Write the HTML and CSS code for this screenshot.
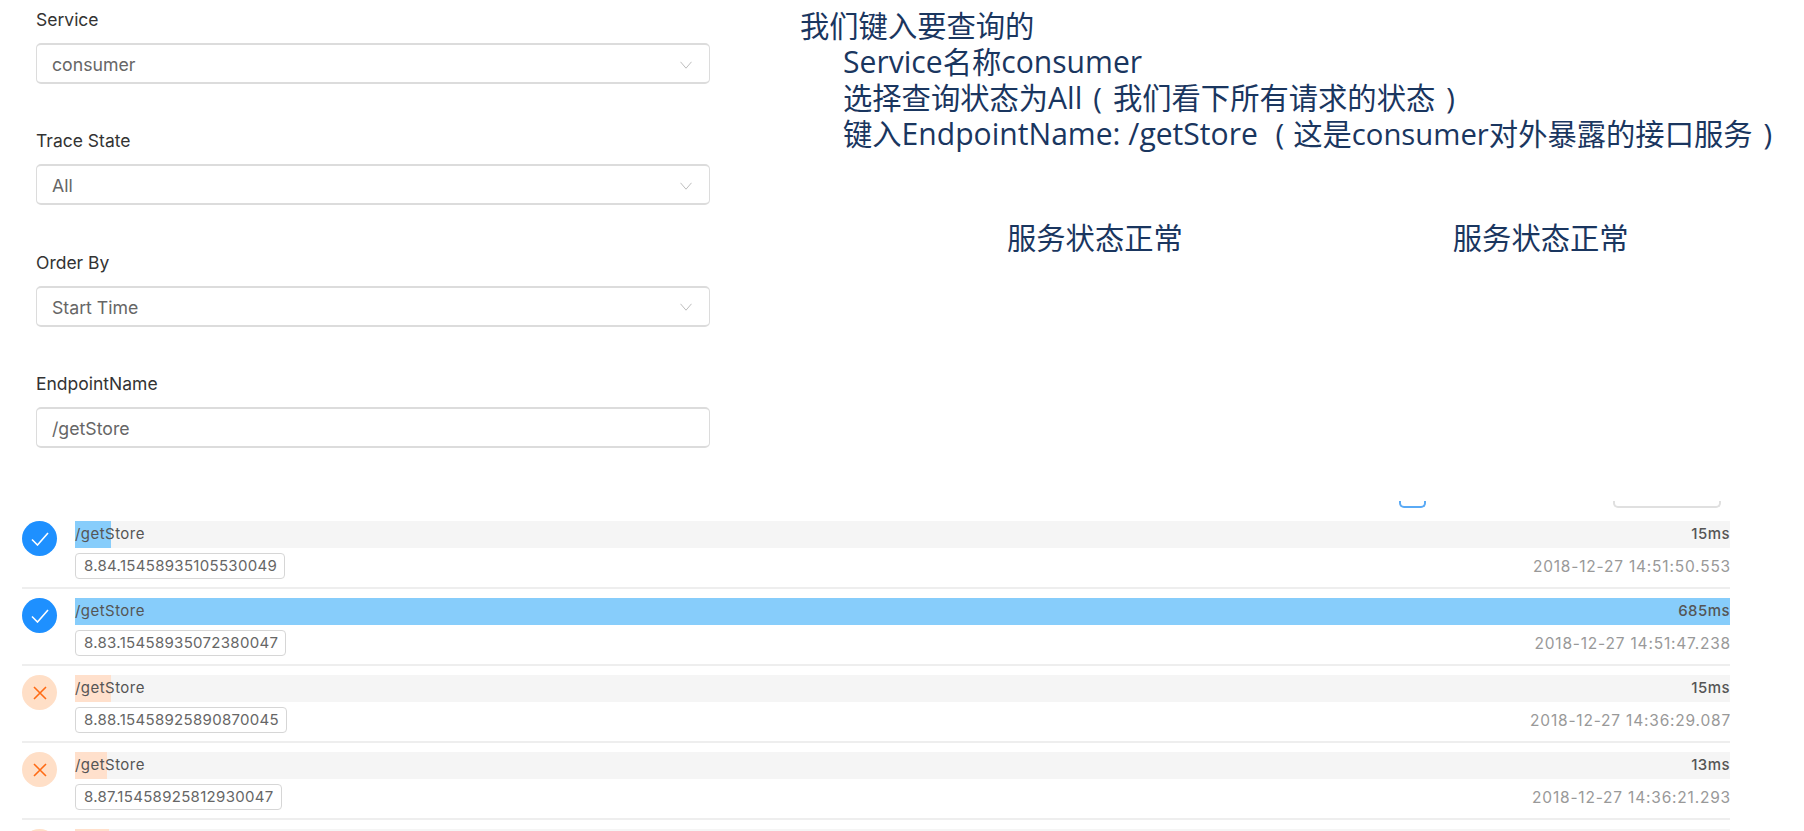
FILE: index.html
```html
<!DOCTYPE html>
<html lang="zh-CN">
<head>
<meta charset="utf-8">
<title>Trace</title>
<link rel="stylesheet" href="styles.css">
</head>
<body>
<div class="top">
  <form class="form">
    <div class="field">
      <div class="label">Service</div>
      <div class="control"><span>consumer</span><svg class="chev" viewBox="0 0 12 8"><path d="M.5.8 6 7.2 11.5.8"/></svg></div>
    </div>
    <div class="field">
      <div class="label">Trace State</div>
      <div class="control"><span>All</span><svg class="chev" viewBox="0 0 12 8"><path d="M.5.8 6 7.2 11.5.8"/></svg></div>
    </div>
    <div class="field">
      <div class="label">Order By</div>
      <div class="control"><span>Start Time</span><svg class="chev" viewBox="0 0 12 8"><path d="M.5.8 6 7.2 11.5.8"/></svg></div>
    </div>
    <div class="field">
      <div class="label">EndpointName</div>
      <div class="control"><span>/getStore</span></div>
    </div>
  </form>
  <div class="notes">
    <div class="note-lines">
      <div>我们键入要查询的</div>
      <div class="indent"><span class="latin">Service</span>名称<span class="latin">consumer</span></div>
      <div class="indent">选择查询状态为<span class="latin">All</span><span class="paren">(</span>我们看下所有请求的状态<span class="paren">)</span></div>
      <div class="indent">键入<span class="latin">EndpointName: /getStore</span> <span class="paren paren-wide">(</span>这是<span class="latin latin-tight">consumer</span>对外暴露的接口服务<span class="paren">)</span></div>
    </div>
    <div class="note-status">
      <span>服务状态正常</span>
      <span>服务状态正常</span>
    </div>
  </div>
</div>
<div class="toolbar">
  <div class="clip clip-blue"></div>
  <div class="clip clip-gray"></div>
</div>
<div class="list">
  <div class="row">
    <div class="status ok"><svg viewBox="0 0 18 14"><path d="M1 7.5 6.5 13 17 1"/></svg></div>
    <div class="body">
      <div class="bar"><div class="fill fill-ok" style="width:36px"></div><span class="name">/getStore</span><span class="dur">15ms</span></div>
      <div class="meta"><span class="tag">8.84.15458935105530049</span><span class="time">2018-12-27 14:51:50.553</span></div>
    </div>
  </div>
  <div class="row">
    <div class="status ok"><svg viewBox="0 0 18 14"><path d="M1 7.5 6.5 13 17 1"/></svg></div>
    <div class="body">
      <div class="bar"><div class="fill fill-ok" style="width:100%"></div><span class="name">/getStore</span><span class="dur">685ms</span></div>
      <div class="meta"><span class="tag">8.83.15458935072380047</span><span class="time">2018-12-27 14:51:47.238</span></div>
    </div>
  </div>
  <div class="row">
    <div class="status err"><svg viewBox="0 0 14 14"><path d="M1 1 13 13M13 1 1 13"/></svg></div>
    <div class="body">
      <div class="bar"><div class="fill fill-err" style="width:36px"></div><span class="name">/getStore</span><span class="dur">15ms</span></div>
      <div class="meta"><span class="tag">8.88.15458925890870045</span><span class="time">2018-12-27 14:36:29.087</span></div>
    </div>
  </div>
  <div class="row">
    <div class="status err"><svg viewBox="0 0 14 14"><path d="M1 1 13 13M13 1 1 13"/></svg></div>
    <div class="body">
      <div class="bar"><div class="fill fill-err" style="width:32px"></div><span class="name">/getStore</span><span class="dur">13ms</span></div>
      <div class="meta"><span class="tag">8.87.15458925812930047</span><span class="time">2018-12-27 14:36:21.293</span></div>
    </div>
  </div>
  <div class="row">
    <div class="status err"><svg viewBox="0 0 14 14"><path d="M1 1 13 13M13 1 1 13"/></svg></div>
    <div class="body">
      <div class="bar"><div class="fill fill-err" style="width:34px"></div></div>
    </div>
  </div>
</div>
</body>
</html>
```
FILE: styles.css
```css
* { box-sizing: border-box; }
html, body { height: 100%; }
body {
  margin: 0;
  height: 831px;
  overflow: hidden;
  background: #fff;
  font-family: Inter, "Noto Sans CJK SC", sans-serif;
  color: #333;
}
.top {
  display: flex;
  height: 492px;
}
.form {
  width: 711px;
  margin-left: 36px;
  padding-top: 10px;
  flex: none;
}
.field { height: 121.3px; }
.label {
  font-size: 17.5px;
  line-height: 20px;
  color: #333;
  margin-bottom: 13px;
}
.control {
  height: 41px;
  width: 674px;
  border: 1px solid #dcdcdc;
  border-bottom-width: 2px;
  border-top-width: 2px;
  border-radius: 5px;
  padding: 2px 15px 0;
  display: flex;
  align-items: center;
  justify-content: space-between;
  font-size: 17.7px;
  color: #666;
}
.chev {
  width: 12px;
  height: 8px;
  margin-right: 2px;
  fill: none;
  stroke: #bdbdbd;
  stroke-width: 1;
}
.notes {
  margin-left: 53px;
  padding-top: 9px;
  font-family: "Open Sans", "Noto Sans CJK SC", sans-serif;
  font-size: 29.3px;
  line-height: 35px;
  font-weight: 400;
  color: #1a365f;
  white-space: nowrap;
}
.indent { padding-left: 43px; }
.latin { font-size: 30.1px; }
.latin-tight { font-size: 29.3px; }
.paren { margin: 0 11px; }
.paren-wide { margin-left: 10px; margin-right: 9px; }
.note-status {
  display: flex;
  gap: 270px;
  margin-left: 207px;
  margin-top: 69px;
}
.toolbar {
  height: 15px;
  margin-top: 1px;
  width: 1721px;
  display: flex;
  justify-content: flex-end;
  align-items: flex-end;
  gap: 187px;
}
.clip {
  height: 7px;
  border: 2px solid #e0e0e0;
  border-top: 0;
  border-radius: 0 0 5px 5px;
}
.clip-blue { width: 27px; border-color: #5aaaf5; }
.clip-gray { width: 108px; }
.list {
  margin-left: 22px;
  width: 1708px;
  height: 323px;
  overflow: hidden;
  padding-top: 13px;
}
.row {
  display: flex;
  height: 68px;
  margin-bottom: 9px;
  gap: 18px;
  border-bottom: 2px solid #eee;
}
.status {
  width: 35px;
  height: 35px;
  border-radius: 50%;
  flex: none;
  display: flex;
  align-items: center;
  justify-content: center;
}
.status svg { fill: none; stroke-width: 1.6; }
.ok { background: #1e90ff; }
.ok svg { width: 18px; height: 14px; stroke: #fff; }
.err { background: #ffdfc7; }
.err svg { width: 14px; height: 14px; stroke: #ff6b14; }
.body { flex: 1; min-width: 0; }
.bar {
  position: relative;
  height: 27px;
  padding-bottom: 2px;
  background: #f5f5f5;
  display: flex;
  align-items: center;
  justify-content: space-between;
  font-size: 15px;
  letter-spacing: .45px;
  color: #555;
}
.fill { position: absolute; left: 0; top: 0; bottom: 0; }
.fill-ok { background: #87cdfb; }
.fill-err { background: #ffe0cc; }
.name, .dur { position: relative; }
.dur { font-weight: 500; }
.meta {
  display: flex;
  align-items: center;
  justify-content: space-between;
  margin-top: 5px;
}
.tag {
  height: 26px;
  line-height: 23px;
  padding: 0 7px 0 8px;
  border: 1px solid #d6d6d6;
  border-radius: 4px;
  font-size: 15px;
  letter-spacing: .3px;
  color: #666;
}
.time {
  font-size: 15.5px;
  letter-spacing: .8px;
  margin-right: -1px;
  color: #999;
}
```
